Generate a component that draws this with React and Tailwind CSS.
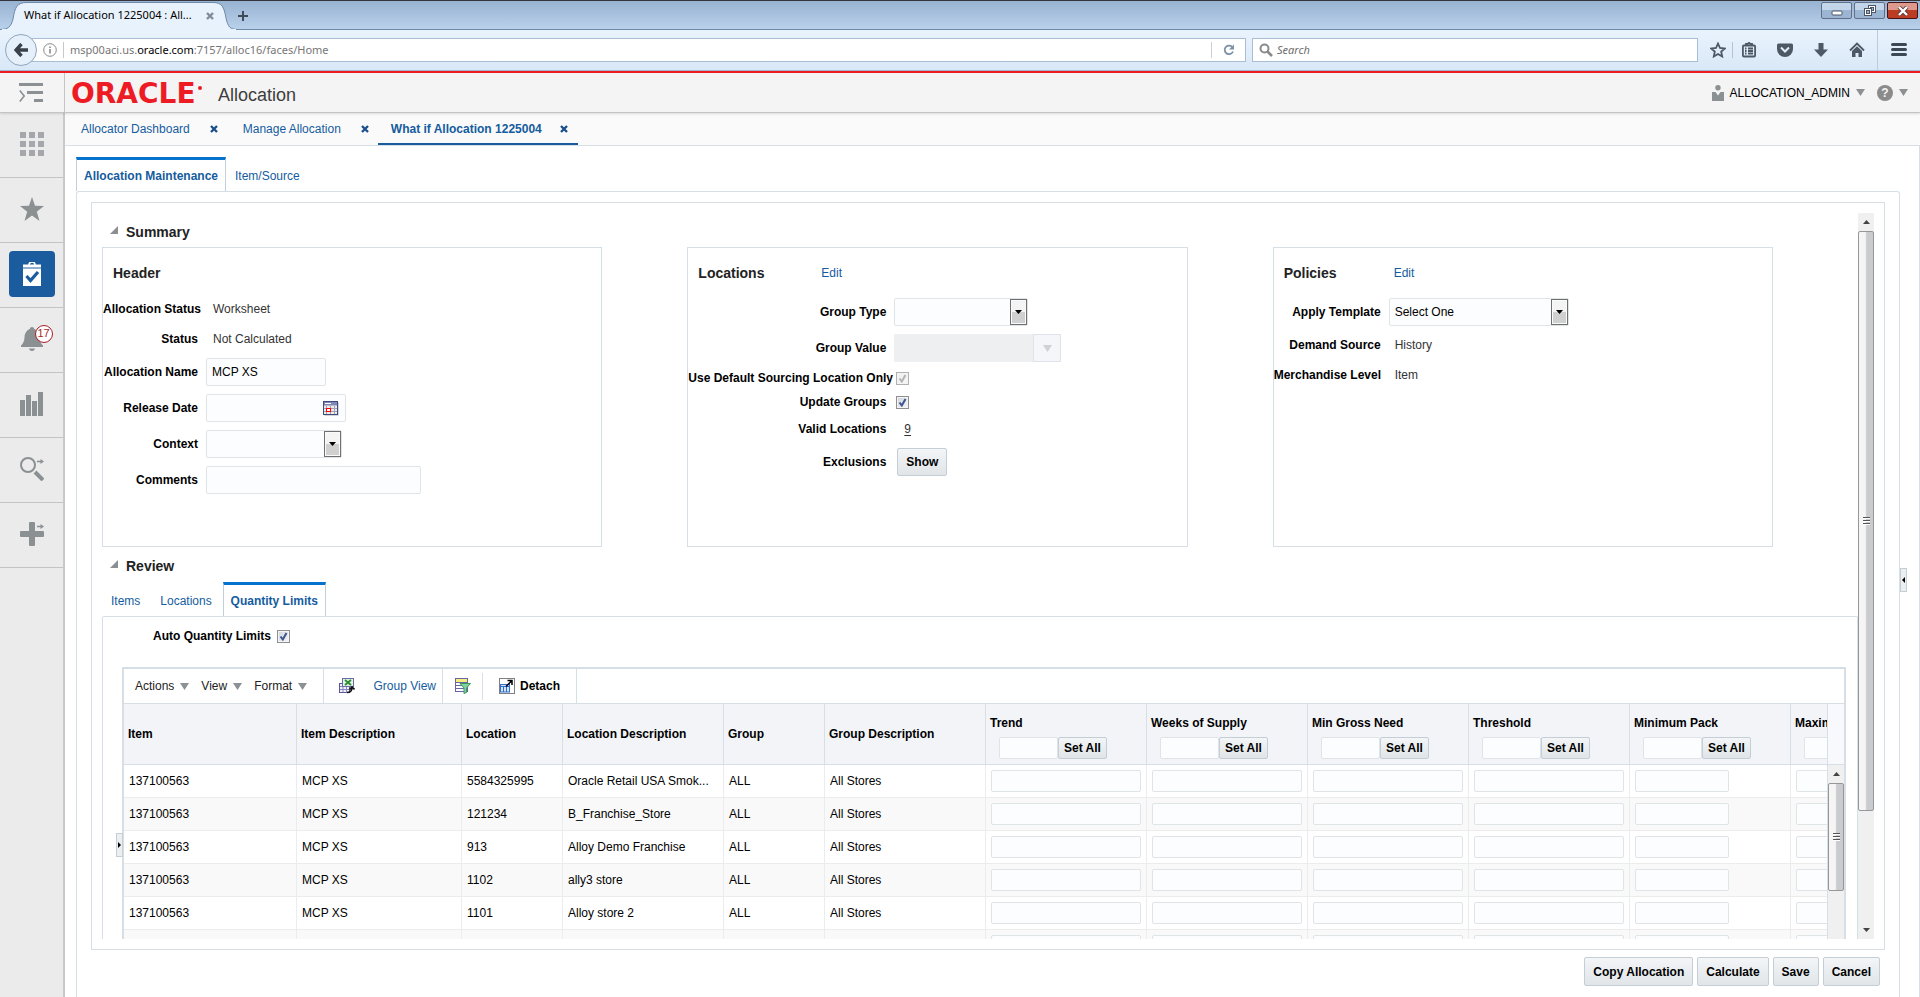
import { Check } from "lucide-react";

const items = [
  { location: "5584325995", description: "Oracle Retail USA Smok..." },
  { location: "121234", description: "B_Franchise_Store" },
  { location: "913", description: "Alloy Demo Franchise" },
  { location: "1102", description: "ally3 store" },
  { location: "1101", description: "Alloy store 2" },
  { location: "", description: "" },
];

const limitColumns = [
  "Trend",
  "Weeks of Supply",
  "Min Gross Need",
  "Threshold",
  "Minimum Pack",
  "Maximum Pack",
];

function Triangle({ className = "" }) {
  return (
    <svg viewBox="0 0 9 7" className={`h-[7px] w-[9px] shrink-0 ${className}`} fill="currentColor">
      <path d="M0 0h9L4.5 7z" />
    </svg>
  );
}

function CloseMark({ className = "" }) {
  return (
    <svg viewBox="0 0 8 8" className={`h-2 w-2 ${className}`} stroke="currentColor" strokeWidth="2.4" fill="none">
      <path d="M1 1l6 6M7 1L1 7" />
    </svg>
  );
}

function Button({ children, className = "" }) {
  return (
    <button
      type="button"
      className={`rounded-[2px] border border-[#c4ced7] bg-linear-to-b from-[#f3f5f7] to-[#e1e5e8] text-xs font-bold whitespace-nowrap text-black ${className}`}
    >
      {children}
    </button>
  );
}

function TextInput({ id, value = "", label, className = "" }) {
  return (
    <input
      id={id}
      type="text"
      aria-label={label}
      defaultValue={value}
      className={`rounded-[2px] border border-[#dfe4e7] bg-[#fcfdfe] px-[5px] text-xs text-black outline-none ${className}`}
    />
  );
}

function SelectBox({ id, value = "", className = "" }) {
  return (
    <div className={`relative h-7 ${className}`}>
      <select
        id={id}
        defaultValue={value}
        className="h-full w-full appearance-none rounded-[2px] border border-[#dfe4e7] bg-[#fcfdfe] pl-[5px] text-xs text-black outline-none"
      >
        <option value={value}>{value}</option>
      </select>
      <span className="pointer-events-none absolute inset-y-px right-px flex w-[17px] items-center justify-center border border-[#707070] bg-linear-to-b from-[#f4f4f4] from-50% to-[#d0d0d0] to-50% shadow-[inset_0_0_0_1px_#fafafa]">
        <svg viewBox="0 0 7 4" className="h-1 w-[7px]">
          <path d="M0 0h7L3.5 4z" />
        </svg>
      </span>
    </div>
  );
}

function CheckBox({ id, disabled = false }) {
  return (
    <span className="relative ml-0.5 block h-[13px] w-[13px]">
      <input
        id={id}
        type="checkbox"
        defaultChecked
        disabled={disabled}
        className="block h-[13px] w-[13px] appearance-none border border-[#8e8f8f] bg-linear-to-br from-[#cfd4da] to-[#f6f6f6] shadow-[inset_0_0_0_1px_#f4f4f4] disabled:border-[#b1b1b1] disabled:from-[#f0f0f0]"
      />
      <svg
        viewBox="0 0 9 9"
        className={`pointer-events-none absolute top-0.5 left-0.5 h-[9px] w-[9px] ${disabled ? "text-[#b4b4b4]" : "text-[#3c5494]"}`}
        fill="none"
        stroke="currentColor"
        strokeWidth="2"
      >
        <path d="M1.500 4.500L3.800 7.500 7.500 1" />
      </svg>
    </span>
  );
}

function Field({ id, label, labelWidth, height = "h-9", children }) {
  return (
    <div className={`flex items-center gap-2 ${height}`}>
      <label htmlFor={id} className={`shrink-0 text-right font-bold whitespace-nowrap text-black ${labelWidth}`}>
        {label}
      </label>
      {children}
    </div>
  );
}

function Box({ title, editGap, children }) {
  return (
    <section className="h-[300px] border border-[#d6dfe6]">
      <div className="flex h-[46px] items-center pt-1 pl-[10px]">
        <h3 className={`text-sm font-bold text-[#222] ${editGap || ""}`}>{title}</h3>
        {editGap && (
          <a href="#edit" className="text-[#145c9e]">
            Edit
          </a>
        )}
      </div>
      {children}
    </section>
  );
}

function SectionTitle({ children, className = "" }) {
  return (
    <div className={`flex items-center gap-2 pl-2 ${className}`}>
      <svg viewBox="0 0 8 8" className="mb-1 h-2 w-2" fill="#8b8f92">
        <path d="M8 0v8H0z" />
      </svg>
      <h2 className="text-sm font-bold text-[#222]">{children}</h2>
    </div>
  );
}

function SubTab({ active = false, children, className = "" }) {
  return (
    <button
      type="button"
      className={`h-[34px] border-t-[3px] text-xs text-[#145c9e] ${
        active ? "border-x border-x-[#c4ced7] border-t-[#0572ce] font-bold" : "border-t-transparent"
      } ${className}`}
    >
      {children}
    </button>
  );
}

function ScrollBar({ thumb, end = false, className = "" }) {
  return (
    <div className={`flex w-4 shrink-0 flex-col bg-[#f0f0f0] ${className}`}>
      <div className="flex h-[18px] shrink-0 items-center justify-center">
        <svg viewBox="0 0 7 4" className="h-1 w-[7px]" fill="#444">
          <path d="M0 4h7L3.5 0z" />
        </svg>
      </div>
      <div className="min-h-0 flex-1">
        <div
          className={`flex flex-col items-center justify-center gap-px rounded-[2px] border border-[#979797] bg-linear-to-r from-[#f5f5f5] from-45% to-[#c9cbcf] to-55% ${thumb}`}
        >
          <span className="h-0.5 w-[7px] border-t border-[#555] bg-white" />
          <span className="h-0.5 w-[7px] border-t border-[#555] bg-white" />
          <span className="h-0.5 w-[7px] border-t border-[#555] bg-white" />
        </div>
      </div>
      {end && (
        <div className="flex h-[18px] shrink-0 items-center justify-center">
          <svg viewBox="0 0 7 4" className="h-1 w-[7px]" fill="#444">
            <path d="M0 0h7L3.5 4z" />
          </svg>
        </div>
      )}
    </div>
  );
}

function WindowButton({ label, close = false, children }) {
  return (
    <button
      type="button"
      aria-label={label}
      className={`flex h-[17px] w-[31px] items-center justify-center rounded-[2px] border ${
        close
          ? "border-[#43131a] bg-linear-to-b from-[#dd9a8c] from-45% to-[#bb3b23] to-50%"
          : "border-[#5f7088] bg-linear-to-b from-[#c3d5e9] from-45% to-[#9bb5d2] to-50%"
      }`}
    >
      {children}
    </button>
  );
}

function BrowserChrome() {
  return (
    <div className="shrink-0 font-['Noto_Sans',sans-serif] text-[11px]">
      <div className="flex h-[30px] items-start justify-between border-t border-b border-t-[#33353a] border-b-[#7089a8] bg-linear-to-b from-[#98b2d2] to-[#b9d1ea]">
        <div className="flex">
          {/* active browser tab with its curved sides */}
          <div className="relative h-[29px] w-[238px]">
            <svg viewBox="0 0 238 29" className="absolute inset-0 h-[29px] w-[238px]">
              <path
                d="M0 28.500C8 28.500 11 26 13 18C15 6 17 1.500 27 1.500H213C222 1.500 224 6 226 17C228 26 230 28.500 238 28.500V29H0z"
                fill="#e8f2fc"
                stroke="#7089a8"
              />
              <path d="M2 29h234" stroke="#e8f2fc" strokeWidth="2" />
            </svg>
            <div className="relative flex h-full items-center gap-2 pl-6 text-black">
              <span className="w-[174px] whitespace-nowrap">What if Allocation 1225004 : All...</span>
              <button type="button" aria-label="Close tab">
                <CloseMark className="text-[#7f8b99]" />
              </button>
            </div>
          </div>
          <button type="button" aria-label="New tab" className="flex h-[29px] items-center">
            <svg viewBox="0 0 10 10" className="h-[10px] w-[10px]" stroke="#404b57" strokeWidth="2">
              <path d="M5 0v10M0 5h10" />
            </svg>
          </button>
        </div>
        <div className="flex gap-0.5 pt-px pr-0.5">
          <WindowButton label="Minimize">
            <svg viewBox="0 0 12 12" className="h-3 w-3">
              <rect x="1" y="6" width="10" height="4" rx="1" fill="#fff" stroke="#4c5666" />
            </svg>
          </WindowButton>
          <WindowButton label="Restore">
            <svg viewBox="0 0 12 12" className="h-3 w-3" fill="#fff" stroke="#4c5666">
              <rect x="4.500" y=".5" width="7" height="7" />
              <rect x="6.500" y="2.500" width="3" height="3" fill="#9bb5d2" />
              <rect x=".5" y="3.500" width="7" height="7" />
              <rect x="2.500" y="5.500" width="3" height="3" fill="#9bb5d2" />
            </svg>
          </WindowButton>
          <WindowButton label="Close" close>
            <svg viewBox="0 0 12 10" className="h-[10px] w-3" fill="none">
              <path d="M2 1l8 8M10 1L2 9" stroke="#5b3a3e" strokeWidth="4" />
              <path d="M2 1l8 8M10 1L2 9" stroke="#fff" strokeWidth="2.400" />
            </svg>
          </WindowButton>
        </div>
      </div>

      <div className="flex h-[41px] items-center border-b border-[#a3b8d0] bg-linear-to-b from-[#e9f3fd] to-[#d9e8f7] pl-[5px]">
        <button
          type="button"
          aria-label="Back"
          className="relative z-10 flex h-8 w-8 shrink-0 items-center justify-center rounded-full border border-[#8fa5bf] bg-[#e6f0fb]"
        >
          <svg viewBox="0 0 14 14" className="h-[14px] w-[14px]" stroke="#3a4149" strokeWidth="3.400" fill="none">
            <path d="M7.500 1L2 7l5.500 6M2 7h12" />
          </svg>
        </button>
        <div className="-ml-2 flex h-6 flex-1 items-center border border-[#a9bdd4] bg-white pl-[13px]">
          <svg viewBox="0 0 14 14" className="h-[14px] w-[14px]" fill="none" stroke="#8a8a8a">
            <circle cx="7" cy="7" r="6.300" />
            <path d="M7 6v4.500M7 3.500v1.500" strokeWidth="1.600" />
          </svg>
          <span className="mx-1.5 h-4 w-px bg-[#c8c8c8]" />
          <span className="flex-1 text-[#767676]">
            msp00aci.us.<span className="text-black">oracle.com</span>:7157/alloc16/faces/Home
          </span>
          <span className="h-4 w-px bg-[#c8d0d8]" />
          <button type="button" aria-label="Reload" className="flex w-[33px] justify-center">
            <svg viewBox="0 0 12 12" className="h-3 w-3" fill="none" stroke="#7c90a8" strokeWidth="1.800">
              <path d="M10 7.500A4.300 4.300 0 1 1 9 2.800" />
              <path d="M11 .5v5H6z" fill="#7c90a8" stroke="none" />
            </svg>
          </button>
        </div>
        <div className="ml-1.5 flex h-6 w-[446px] items-center gap-1 border border-[#a9bdd4] bg-white pl-1.5">
          <svg viewBox="0 0 14 14" className="h-[14px] w-[14px]" fill="none" stroke="#8a8a8a" strokeWidth="2">
            <circle cx="5.500" cy="5.500" r="4" />
            <path d="M8.500 8.500L13 13" strokeWidth="2.600" />
          </svg>
          <input
            type="text"
            aria-label="Search the web"
            placeholder="Search"
            className="flex-1 italic outline-none placeholder:text-[#6d6d6d]"
          />
        </div>
        <div className="flex h-full items-center text-[#4d5a66]">
          <button type="button" aria-label="Bookmark" className="ml-3">
            <svg viewBox="0 0 16 16" className="h-4 w-4" fill="none" stroke="currentColor" strokeWidth="1.800">
              <path d="M8 1.500l2 4.500 4.800.5-3.600 3.200 1 4.800L8 12l-4.200 2.500 1-4.800L1.200 6.500 6 6z" />
            </svg>
          </button>
          <span className="ml-1.5 h-4 w-px bg-[#b4c4d6]" />
          <button type="button" aria-label="Bookmarks list" className="ml-2">
            <svg viewBox="0 0 16 16" className="h-4 w-4" fill="none" stroke="currentColor" strokeWidth="1.800">
              <rect x="1.900" y="3.500" width="12.200" height="11" rx="1" />
              <path d="M5 3.500V2h1.500L8 .8 9.500 2H11v1.500M4 6.500h1.500M7 6.500h5M4 9h1.500M7 9h5M4 11.500h1.500M7 11.500h5" />
            </svg>
          </button>
          <button type="button" aria-label="Pocket" className="ml-5">
            <svg viewBox="0 0 16 16" className="h-4 w-4">
              <path d="M1.500 1.500h13q1.500 0 1.500 1.500v4a8 8 0 0 1-16 0V3q0-1.500 1.500-1.500z" fill="currentColor" />
              <path d="M4 5.500l4 4 4-4" fill="none" stroke="#e4eefa" strokeWidth="2" />
            </svg>
          </button>
          <button type="button" aria-label="Downloads" className="ml-5">
            <svg viewBox="0 0 16 16" className="h-4 w-4" fill="currentColor">
              <path d="M5.500 1h5v6.500H15l-7 7.500-7-7.500h4.500z" />
            </svg>
          </button>
          <button type="button" aria-label="Home page" className="ml-5">
            <svg viewBox="0 0 16 16" className="h-4 w-4" fill="none" stroke="currentColor" strokeWidth="1.800">
              <path d="M1 8.500l7-7 7 7" />
              <path d="M3 9l5-4.800L13 9v6H9.500v-4h-3v4H3z" fill="currentColor" stroke="none" />
            </svg>
          </button>
          <span className="ml-3 h-full w-px bg-[#bccbdc]" />
          <button type="button" aria-label="Menu" className="mr-[13px] ml-[13px]">
            <svg viewBox="0 0 16 14" className="h-[14px] w-4" fill="#3c4853">
              <rect width="16" height="3" rx="1.500" />
              <rect y="5" width="16" height="3" rx="1.500" />
              <rect y="10" width="16" height="3" rx="1.500" />
            </svg>
          </button>
        </div>
      </div>
    </div>
  );
}

function AppHeader() {
  return (
    <header className="relative z-10 flex h-[42px] shrink-0 items-center border-t-2 border-b border-t-[#ed1c24] border-b-[#c4c4c4] bg-[#f4f4f4] shadow-[0_1px_2px_rgba(0,0,0,0.12)]">
      <button
        type="button"
        aria-label="Toggle navigation"
        className="flex h-full w-[65px] items-center justify-center border-r border-[#c4c4c4] pr-0.5"
      >
        <svg viewBox="0 0 24 19" className="h-[19px] w-6" fill="#8b9093">
          <rect width="24" height="3" />
          <rect x="8" y="8" width="16" height="3" />
          <rect x="15" y="16" width="9" height="3" />
          <path d="M.8 7.500L5.200 13 .8 18.500" fill="none" stroke="#8b9093" strokeWidth="1.600" />
        </svg>
      </button>
      <div className="flex h-full w-[153px] items-center pt-0.5 pl-1.5 font-['DejaVu_Sans',sans-serif] text-[28px] leading-none font-bold text-[#ed1c24]">
        ORACLE
        <span className="mb-3 ml-0.5 h-1 w-1 rounded-full bg-[#ed1c24]" />
      </div>
      <h1 className="flex-1 pt-1 text-lg leading-6 text-[#3d3d3d]">Allocation</h1>
      <button type="button" className="flex items-center gap-1.5 text-xs text-black">
        <svg viewBox="0 0 12 16" className="h-4 w-3" fill="#8b9093">
          <circle cx="6" cy="2.700" r="2.700" />
          <path d="M0 7h3.500L6 10.500 8.500 7H12v9H0z" />
        </svg>
        ALLOCATION_ADMIN
        <Triangle className="text-[#8b9093]" />
      </button>
      <button type="button" aria-label="Help" className="mr-3 ml-3 flex items-center gap-1.5">
        <span className="flex h-4 w-4 items-center justify-center rounded-full bg-[#8b8b8b] text-xs leading-4 font-bold text-[#f4f4f4]">
          ?
        </span>
        <Triangle className="text-[#8b9093]" />
      </button>
    </header>
  );
}

function SideBar() {
  const cell = "flex h-[65px] w-full items-center justify-center border-b border-[#c4c4c4] pb-[3px]";

  return (
    <nav className="w-[65px] shrink-0 border-r-2 border-[#c9c9c9] bg-[#ebebeb] text-[#8b9093]">
      <button type="button" aria-label="Applications" className={cell}>
        <svg viewBox="0 0 24 24" className="h-6 w-6" fill="#a6a7ac">
          {[0, 9, 18].map((y) =>
            [0, 9, 18].map((x) => <rect key={`${x}-${y}`} x={x} y={y} width="6" height="6" />)
          )}
        </svg>
      </button>
      <button type="button" aria-label="Favorites" className={cell}>
        <svg viewBox="0 0 24 24" className="h-6 w-6" fill="currentColor">
          <path d="M12 0l3 8.800 9 .2-7.200 5.700L19.500 24 12 18.500 4.500 24l2.700-9.300L0 9l9-.2z" />
        </svg>
      </button>
      <button type="button" aria-label="Tasks" className={cell}>
        <span className="flex h-[46px] w-[46px] items-center justify-center rounded bg-[#1a5c9e]">
          <svg viewBox="0 0 18 24" className="h-6 w-[18px]">
            <path d="M6 3a3 3 0 0 1 6 0" fill="none" stroke="#fff" strokeWidth="1.600" />
            <path d="M0 2.500h18V5H0zM0 6.500h18V24H0z" fill="#fff" />
            <path d="M0 5h18v1.500H0z" fill="#8fb0d0" />
            <path d="M3.500 14l4 4.500L15 10" fill="none" stroke="#1a5c9e" strokeWidth="3.200" />
          </svg>
        </span>
      </button>
      <button type="button" aria-label="Notifications" className={cell}>
        <span className="relative">
          <svg viewBox="0 0 22 24" className="h-6 w-[22px]" fill="currentColor">
            <path d="M11 0q2 0 2.300 2 5 2 5.200 8.500.2 5 3.500 8V20H0v-1.500q3.300-3 3.500-8Q3.700 4 8.700 2 9 0 11 0zM8 21.500h6q-.5 2.500-3 2.500t-3-2.500z" />
          </svg>
          <span className="absolute -top-0.5 left-[14px] flex h-[18px] w-[18px] items-center justify-center rounded-full border border-[#a81e28] bg-white text-[11px] leading-none text-[#a81e28]">
            17
          </span>
        </span>
      </button>
      <button type="button" aria-label="Reports" className={cell}>
        <svg viewBox="0 0 24 24" className="h-6 w-6" fill="currentColor">
          <path d="M0 8h5v16H0zM6 3h5v21H6zM12 9h5v15h-5zM18 0h5v24h-5z" />
        </svg>
      </button>
      <button type="button" aria-label="Search" className={cell}>
        <svg viewBox="0 0 24 24" className="h-6 w-6" fill="none" stroke="currentColor">
          <circle cx="8" cy="8" r="7" strokeWidth="2" />
          <path d="M15 15l8 8" strokeWidth="4" />
          <path d="M17 4.500h4" strokeWidth="1.600" />
          <path d="M20.500 2l3.500 2.500L20.500 7z" fill="currentColor" stroke="none" />
        </svg>
      </button>
      <button type="button" aria-label="Create" className={cell}>
        <svg viewBox="0 0 24 24" className="h-6 w-6" fill="currentColor">
          <path d="M10 0h4q1 0 1 1v8h8q1 0 1 1v4q0 1-1 1h-8v8q0 1-1 1h-4q-1 0-1-1v-8H1q-1 0-1-1v-4q0-1 1-1h8V1q0-1 1-1z" />
          <path d="M17 3.700h4v1.600h-4zM20.500 2L24 4.500 20.500 7z" />
        </svg>
      </button>
    </nav>
  );
}

function PageTabs() {
  return (
    <div className="flex h-8 shrink-0 bg-[#fafafa] pl-4 text-[#145c9e]">
      <div className="mr-[25px] flex items-center gap-5">
        <a href="#dashboard" className="whitespace-nowrap">Allocator Dashboard</a>
        <button type="button" aria-label="Close Allocator Dashboard">
          <CloseMark className="text-[#1b4f8a]" />
        </button>
      </div>
      <div className="flex items-center gap-5">
        <a href="#manage" className="whitespace-nowrap">Manage Allocation</a>
        <button type="button" aria-label="Close Manage Allocation">
          <CloseMark className="text-[#1b4f8a]" />
        </button>
      </div>
      <div className="ml-[9px] flex items-center gap-[18px] border-b-2 border-[#1a5c9e] pt-0.5 pr-2.5 pl-[13px] font-bold">
        <a href="#what-if" className="whitespace-nowrap">What if Allocation 1225004</a>
        <button type="button" aria-label="Close What if Allocation">
          <CloseMark className="text-[#1b4f8a]" />
        </button>
      </div>
    </div>
  );
}

function Summary() {
  return (
    <div className="mr-[85px] grid grid-cols-3 gap-[85px]">
      <Box title="Header">
        <Field label="Allocation Status" labelWidth="w-[95px]" height="h-[30px]">
          <span className="pl-[7px]">Worksheet</span>
        </Field>
        <Field label="Status" labelWidth="w-[95px]" height="h-[30px]">
          <span className="pl-[7px]">Not Calculated</span>
        </Field>
        <Field id="name" label="Allocation Name" labelWidth="w-[95px]">
          <TextInput id="name" value="MCP XS" className="h-7 w-[120px]" />
        </Field>
        <Field id="release" label="Release Date" labelWidth="w-[95px]">
          <div className="flex h-7 w-[140px] items-center rounded-[2px] border border-[#dfe4e7] bg-[#fcfdfe] pr-1.5">
            <input id="release" type="text" className="h-full min-w-0 flex-1 px-[5px] outline-none" />
            <button type="button" aria-label="Select date">
              <svg viewBox="0 0 16 15" className="h-[15px] w-4">
                <rect x="1.500" y="1.500" width="14" height="13" fill="#a9a9b5" />
                <rect x=".5" y=".5" width="14" height="13" fill="#f1ecdf" stroke="#3f4a7d" />
                <rect x="1" y="1" width="13" height="3.500" fill="#7d87b8" />
                <path d="M2 2.500h6" stroke="#fff" />
                <path d="M3.500 5v8M7.500 5v8M11.500 5v8M1 7.500h13M1 10.500h13" stroke="#9aa1c4" />
                <rect x="3.500" y="7.500" width="4" height="3" fill="#fff" stroke="#f00" />
              </svg>
            </button>
          </div>
        </Field>
        <Field id="context" label="Context" labelWidth="w-[95px]">
          <SelectBox id="context" className="w-[136px]" />
        </Field>
        <Field id="comments" label="Comments" labelWidth="w-[95px]">
          <TextInput id="comments" className="h-7 w-[215px]" />
        </Field>
      </Box>

      <Box title="Locations" editGap="w-[123px]">
        <Field id="groupType" label="Group Type" labelWidth="w-[198px]">
          <SelectBox id="groupType" className="w-[134px]" />
        </Field>
        <Field id="groupValue" label="Group Value" labelWidth="w-[198px]">
          <div className="flex h-7 w-[167px]">
            <input id="groupValue" type="text" disabled className="min-w-0 flex-1 bg-[#eeeff1]" />
            <button
              type="button"
              disabled
              aria-label="Choose group value"
              className="flex w-7 items-center justify-center border border-[#dfe4ea] bg-[#f4f6f9] text-[#cfd1d4]"
            >
              <Triangle />
            </button>
          </div>
        </Field>
        <Field id="sourcing" label="Use Default Sourcing Location Only" labelWidth="w-[198px]" height="h-6">
          <CheckBox id="sourcing" disabled />
        </Field>
        <Field id="update" label="Update Groups" labelWidth="w-[198px]" height="h-6">
          <CheckBox id="update" />
        </Field>
        <Field label="Valid Locations" labelWidth="w-[198px]" height="h-[30px]">
          <a href="#valid" className="ml-2.5 underline underline-offset-2">
            9
          </a>
        </Field>
        <Field label="Exclusions" labelWidth="w-[198px]">
          <Button className="ml-[3px] h-7 px-2">Show</Button>
        </Field>
      </Box>

      <Box title="Policies" editGap="w-[110px]">
        <Field id="template" label="Apply Template" labelWidth="w-[107px]">
          <SelectBox id="template" value="Select One" className="w-[180px]" />
        </Field>
        <Field label="Demand Source" labelWidth="w-[107px]" height="h-[30px]">
          <span className="pl-1.5">History</span>
        </Field>
        <Field label="Merchandise Level" labelWidth="w-[107px]" height="h-[30px]">
          <span className="pl-1.5">Item</span>
        </Field>
      </Box>
    </div>
  );
}

function TableToolbar() {
  return (
    <div className="flex h-[34px] items-center text-black">
      <div className="flex h-full w-[200px] items-center gap-3 border-r border-[#d6dfe6] pl-[11px] text-[#222]">
        {["Actions", "View", "Format"].map((menu) => (
          <button key={menu} type="button" className="flex items-center gap-1.5">
            {menu}
            <Triangle className="text-[#8b9093]" />
          </button>
        ))}
      </div>
      <div className="flex h-full w-[119px] items-center justify-between border-r border-[#d6dfe6] pr-1.5 pl-[15px]">
        <button type="button" aria-label="Export to Excel">
          <svg viewBox="0 0 16 16" className="h-4 w-4">
            <rect x=".5" y="5.500" width="10" height="9" fill="#eef0fa" stroke="#5a559a" />
            <path d="M4 5.500v9M7.500 5.500v9M1 8.500h9M1 11.500h9" stroke="#8d89bd" />
            <rect x="3.500" y=".5" width="11" height="8" fill="#dff3df" stroke="#6b6ba8" />
            <path d="M6 2l6 5M12 2L6 7" stroke="#2c8a36" strokeWidth="1.800" />
            <path d="M8 14.500q5 0 5-5M10.500 11.500l2.500-2.500 2.500 2.500" fill="none" stroke="#111" strokeWidth="1.600" />
          </svg>
        </button>
        <a href="#group-view" className="text-[#145c9e]">
          Group View
        </a>
      </div>
      <div className="flex h-[27px] w-10 items-center border-r border-[#d6dfe6] pl-3">
        <button type="button" aria-label="Query by example">
          <svg viewBox="0 0 16 16" className="h-4 w-4">
            <rect x=".5" y=".5" width="12" height="13" fill="#fff" stroke="#6a66a6" />
            <rect x="1" y="1" width="11" height="3" fill="#f6ee7c" />
            <path d="M1 4.500h11M1 7.500h11M1 10.500h11" stroke="#6a66a6" />
            <path d="M5 5.500h10.500L11.500 10v4.500l-2.500 1V10z" fill="#7fd39c" stroke="#3a9a5e" />
          </svg>
        </button>
      </div>
      <button
        type="button"
        className="flex h-full w-[94px] items-center gap-[5px] border-r border-[#d6dfe6] pl-4 font-bold"
      >
        <svg viewBox="0 0 16 16" className="h-4 w-4">
          <rect x=".5" y=".5" width="15" height="15" fill="#fff" stroke="#000" strokeDasharray="1 1" />
          <rect x="1.500" y="6.500" width="9" height="7.500" fill="#d5e6fa" stroke="#2f6fc7" />
          <path d="M1.500 8.500h9M4.500 8v6M7.500 8v6" stroke="#2f6fc7" />
          <path d="M7 8.500L12.500 3M8.500 2.500h4.500V7" fill="none" stroke="#000" strokeWidth="1.500" />
        </svg>
        Detach
      </button>
    </div>
  );
}

function LimitsTable() {
  const cell = "overflow-hidden border-r border-b border-r-[#eaecee] border-b-[#ececec] pl-[5px] text-left whitespace-nowrap";
  const head = "overflow-hidden border border-l-0 border-[#d6dfe6] pl-1 text-left font-bold whitespace-nowrap";

  return (
    <div className="flex">
      <div className="min-w-0 flex-1 overflow-hidden">
        <table className="w-[1828px] table-fixed border-separate border-spacing-0 text-black">
          <colgroup>
            <col className="w-[173px]" />
            <col className="w-[165px]" />
            <col className="w-[101px]" />
            <col className="w-[161px]" />
            <col className="w-[101px]" />
            <col className="w-[161px]" />
            {limitColumns.map((name) => (
              <col key={name} className="w-[161px]" />
            ))}
          </colgroup>
          <thead>
            <tr className="h-[62px] bg-[#f2f4f8]">
              <th className={head}>Item</th>
              <th className={head}>Item Description</th>
              <th className={head}>Location</th>
              <th className={head}>Location Description</th>
              <th className={head}>Group</th>
              <th className={head}>Group Description</th>
              {limitColumns.map((name) => (
                <th key={name} className={head}>
                  <div className="pt-1.5 pb-1.5 leading-4">{name}</div>
                  <div className="flex pl-[9px]">
                    <TextInput label={`${name} for all rows`} className="h-[22px] w-[59px]" />
                    <Button className="h-[22px] w-[49px]">Set All</Button>
                  </div>
                </th>
              ))}
            </tr>
          </thead>
          <tbody>
            {items.map((item, index) => (
              <tr key={index} className="h-[33px] even:bg-[#f9f9f9]">
                <td className={cell}>{item.location && "137100563"}</td>
                <td className={cell}>{item.location && "MCP XS"}</td>
                <td className={cell}>{item.location}</td>
                <td className={cell}>{item.description}</td>
                <td className={cell}>{item.location && "ALL"}</td>
                <td className={cell}>{item.location && "All Stores"}</td>
                {limitColumns.map((name) => (
                  <td key={name} className={cell}>
                    <TextInput
                      label={`${name}, row ${index + 1}`}
                      className={`block h-[22px] ${name.includes("Pack") ? "w-[94px]" : "w-[150px]"}`}
                    />
                  </td>
                ))}
              </tr>
            ))}
          </tbody>
        </table>
      </div>
      <div className="flex w-[17px] flex-col border-l border-[#d6dfe6]">
        <div className="h-[62px] border-y border-[#d6dfe6] bg-[#f8f9fc]" />
        <ScrollBar thumb="h-[108px]" className="flex-1" />
      </div>
    </div>
  );
}

function Review() {
  return (
    <div className="rounded-t-[2px] border-x border-t border-[#d6dfe6] pr-[11px] pl-[19px]">
      <div className="mb-3 flex h-[38px] items-center gap-1 pl-[31px]">
        <label htmlFor="auto" className="font-bold text-black">
          Auto Quantity Limits
        </label>
        <CheckBox id="auto" />
      </div>
      <div className="relative border-x-2 border-t-2 border-[#d6dfe6]">
        <button
          type="button"
          aria-label="Expand left pane"
          className="absolute top-[164px] -left-2 flex h-6 w-[7px] items-center justify-center border border-[#c4ced7] bg-[#eceef0]"
        >
          <svg viewBox="0 0 3 6" className="h-1.5 w-[3px]">
            <path d="M0 0v6l3-3z" />
          </svg>
        </button>
        <TableToolbar />
        <LimitsTable />
      </div>
    </div>
  );
}

export default function App() {
  return (
    <div className="flex h-screen min-w-0 flex-col overflow-hidden bg-white font-['Liberation_Sans',Arial,sans-serif] text-xs text-[#333]">
      <BrowserChrome />
      <AppHeader />
      <div className="flex min-h-0 flex-1">
        <SideBar />
        <div className="flex min-w-0 flex-1 flex-col">
          <PageTabs />
          <main className="flex min-h-0 flex-1 border-t border-r border-[#d6dfe6] pt-[11px] pl-[11px]">
            <div className="flex min-w-0 flex-1 flex-col">
              <div className="flex">
                <SubTab active className="w-[150px]">
                  Allocation Maintenance
                </SubTab>
                <SubTab className="px-[9px]">Item/Source</SubTab>
              </div>
              <div className="flex min-h-0 flex-1 flex-col rounded-t-[3px] border-x border-t border-[#d6dfe6] pt-[10px] pr-[14px] pl-[14px]">
                <div className="flex min-h-0 flex-1 border border-[#d6dfe6] p-[10px]">
                  <div className="min-w-0 flex-1 overflow-hidden">
                    <SectionTitle className="h-[34px] pt-1">Summary</SectionTitle>
                    <Summary />
                    <SectionTitle className="h-[35px] pt-0.5">Review</SectionTitle>
                    <div className="flex gap-0.5">
                      <SubTab className="px-[9px]">Items</SubTab>
                      <SubTab className="px-[9px]">Locations</SubTab>
                      <SubTab active className="w-[103px]">
                        Quantity Limits
                      </SubTab>
                    </div>
                    <Review />
                  </div>
                  <ScrollBar thumb="h-[84%]" end />
                </div>
                <div className="flex h-[47px] shrink-0 justify-end gap-1 pt-[7px] pr-[5px]">
                  <Button className="h-[29px] px-2">Copy Allocation</Button>
                  <Button className="h-[29px] px-2">Calculate</Button>
                  <Button className="h-[29px] px-2">Save</Button>
                  <Button className="h-[29px] px-2">Cancel</Button>
                </div>
              </div>
            </div>
            <div className="flex w-[19px] flex-col items-center justify-center pt-1.5">
              <button
                type="button"
                aria-label="Collapse right pane"
                className="mr-3 flex h-6 w-[7px] items-center justify-center border border-[#c4ced7] bg-[#eceef0]"
              >
                <svg viewBox="0 0 3 6" className="h-1.5 w-[3px]">
                  <path d="M3 0v6L0 3z" />
                </svg>
              </button>
            </div>
          </main>
        </div>
      </div>
    </div>
  );
}
